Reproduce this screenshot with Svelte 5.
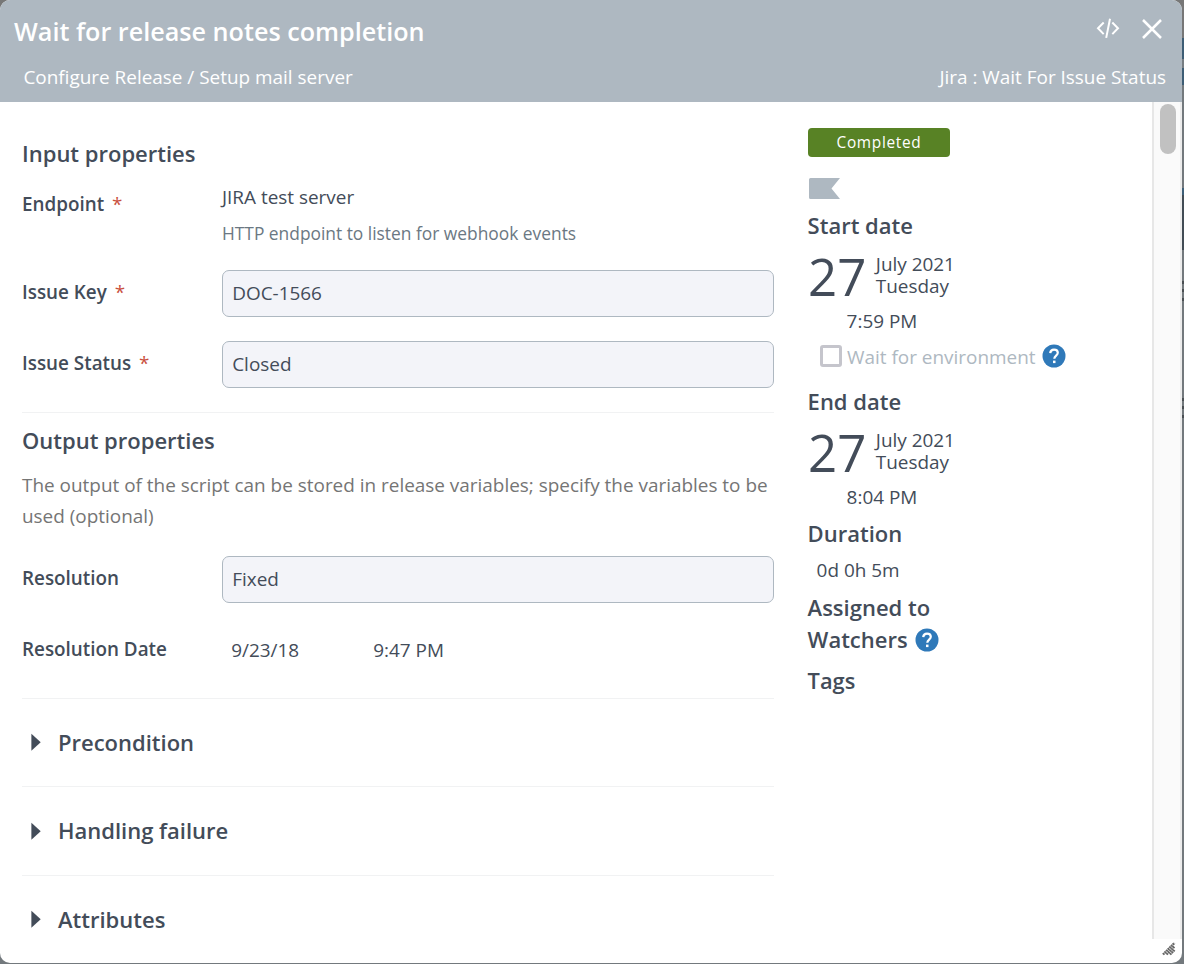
<script>
  const sections = ['Precondition', 'Handling failure', 'Attributes'];
</script>

{#snippet help()}
  <svg class="help" viewBox="0 0 24 24" width="24" height="24" aria-label="Help">
    <circle cx="12" cy="12" r="11.5" fill="#2f79b9" />
    <path d="M8.2 9.2C8.4 6.9 9.9 5.6 12 5.6c2.2 0 3.8 1.3 3.8 3.2 0 2.7-3.5 3-3.5 6" fill="none" stroke="#fff" stroke-width="2.2" />
    <rect x="11" y="16.6" width="2.5" height="2.5" fill="#fff" />
  </svg>
{/snippet}

{#snippet dateBlock(title, time)}
  <h2>{title}</h2>
  <div class="date">
    <span class="day">27</span>
    <div class="month"><span>July 2021</span><span>Tuesday</span></div>
  </div>
  <div class="time">{time}</div>
{/snippet}

<div class="backdrop">
  <div class="modal">
    <header>
      <div class="top">
        <h1>Wait for release notes completion</h1>
        <svg class="code" width="24" height="24" viewBox="0 0 24 24" fill="none" stroke="#fff" stroke-width="2">
          <path d="M7.7 6.5 2 12.3l5.7 5.8M16.3 6.5l5.7 5.8-5.7 5.8M14 2.7l-3.8 19.2" />
        </svg>
        <svg class="close" width="20" height="20" viewBox="0 0 20 20" fill="none" stroke="#fff" stroke-width="2.5">
          <path d="M1 1l18 18M19 1 1 19" />
        </svg>
      </div>
      <div class="sub"><span class="path">Configure Release / Setup mail server</span><span class="kind">Jira : Wait For Issue Status</span></div>
    </header>

    <div class="body">
      <main>
        <h2>Input properties</h2>
        <div class="row endpoint">
          <div class="label">Endpoint <i>*</i></div>
          <div class="value">
            <div class="server">JIRA test server</div>
            <div class="hint">HTTP endpoint to listen for webhook events</div>
          </div>
        </div>
        <div class="row field">
          <div class="label">Issue Key <i>*</i></div>
          <div class="input">DOC-1566</div>
        </div>
        <div class="row field">
          <div class="label">Issue Status <i>*</i></div>
          <div class="input">Closed</div>
        </div>
        <section class="output">
          <h2>Output properties</h2>
          <p>The output of the script can be stored in release variables; specify the variables to be used (optional)</p>
          <div class="row field">
            <div class="label">Resolution</div>
            <div class="input">Fixed</div>
          </div>
          <div class="row field">
            <div class="label">Resolution Date</div>
            <div class="datetime"><span class="d">9/23/18</span><span>9:47 PM</span></div>
          </div>
        </section>
        {#each sections as s}
          <section class="fold">
            <svg width="10" height="18" viewBox="0 0 10 18"><path d="M.4 .7 9.7 9.2 .4 17.7z" fill="#434c59" /></svg>
            <h2>{s}</h2>
          </section>
        {/each}
      </main>

      <aside>
        <div class="badge">Completed</div>
        <svg class="flag" width="31" height="21" viewBox="0 0 31 21"><path d="M1.5 0H31l-8.5 10.5L31 21H1.5Q0 21 0 19.5v-18Q0 0 1.5 0z" fill="#aeb8c1" /></svg>
        {@render dateBlock('Start date', '7:59 PM')}
        <div class="wait"><span class="check"></span><span class="waittext">Wait for environment</span>{@render help()}</div>
        {@render dateBlock('End date', '8:04 PM')}
        <h2 class="dur">Duration</h2>
        <div class="duration">0d 0h 5m</div>
        <h2 class="assigned">Assigned to</h2>
        <h2 class="watch"><span>Watchers</span>{@render help()}</h2>
        <h2 class="tags">Tags</h2>
      </aside>

      <div class="track"><div class="thumb"></div></div>
    </div>
    <svg class="grip" width="14" height="14" viewBox="0 0 14 14" stroke="#666" stroke-width="2.4" stroke-dasharray="1.8 .5">
      <path d="M1 12.5 12.5 1M4.5 12.5 12.5 4.5M8 12.5 12.5 8" fill="none" />
    </svg>
  </div>
</div>

<style>
  :global(body) { margin: 0; overflow: hidden; }
  .backdrop {
    width: 1184px; height: 964px; box-sizing: border-box; padding-right: 2px;
    background: linear-gradient(#777 0 38px, #3d5d75 38px 59px, #777d82 59px 68px, #3d5d75 68px 85px, #73797d 85px 188px, #3d5f78 188px 195px, #424c55 195px 250px, #73797d 250px 281px, #4a4f53 281px 284px, #73797d 284px 289px, #4a4f53 289px 292px, #73797d 292px 298px, #4a4f53 298px 301px, #73797d 301px 398px, #4a4f53 398px 401px, #73797d 401px 406px, #4a4f53 406px 409px, #73797d 409px 415px, #4a4f53 415px 418px, #73797d 418px);
    font-family: "Open Sans", "Noto Sans", sans-serif; font-size: 18.93px; color: #434c59;
  }
  .modal { position: relative; height: 963px; background: #fff; border-radius: 10px; overflow: hidden; }
  header { height: 102px; background: #aeb8c1; color: #fff; }
  .top { display: flex; align-items: center; height: 60px; padding: 2px 20px 0 14px; box-sizing: border-box; }
  h1 { margin: 0; font-size: 25.18px; font-weight: 600; line-height: 36px; flex: 1; }
  .code { margin: -6px 22px 0 0; }
  .close { margin-top: -5px; }
  .sub { display: flex; justify-content: space-between; padding: 1px 16px 0 23.4px; line-height: 32px; }
  .body { display: flex; height: 837px; }
  main { width: 752px; padding: 35px 34px 0 22px; flex: none; }
  h2 { margin: 0 0 1px; font-size: 22px; font-weight: 600; line-height: 32px; white-space: nowrap; }
  .row { display: flex; }
  .label { width: 200px; flex: none; font-weight: 600; font-size: 18.85px; }
  .label i { font-style: normal; font-weight: 400; color: #c94f3e; margin-left: 3px; }
  .endpoint { height: 100px; box-sizing: border-box; }
  .endpoint .label { padding-top: 18px; line-height: 32px; }
  .server { padding-top: 11px; line-height: 32px; }
  .hint { font-size: 17.36px; line-height: 32px; padding-top: 4px; color: #6b7883; }
  .field { height: 47px; margin-bottom: 24px; }
  .field .label { line-height: 44px; }
  .input { flex: 1; border: 1px solid #aeb8c1; border-radius: 7px; background: #f3f4f9; padding-left: 9.2px; line-height: 45px; }
  .output { border-top: 1px solid #f1f2f3; padding-top: 11px; height: 273.7px; }
  .output p { margin: 14px 0 24px; line-height: 31px; color: #757575; }
  .datetime { display: flex; line-height: 47px; padding-left: 9.2px; }
  .d { width: 142px; }
  .fold { border-top: 1px solid #f1f2f3; height: 87.5px; display: flex; align-items: center; gap: 17px; padding-left: 9px; }
  aside { width: 344px; padding-top: 26px; box-sizing: border-box; flex: none; }
  aside h2 { margin-left: -.4px; }
  .badge { width: 142px; height: 29px; line-height: 29px; border-radius: 4px; background: #588225; color: #fff; text-align: center; font-size: 15.4px; letter-spacing: .7px; }
  .flag { display: block; margin: 21px 0 10px 1px; }
  .date { display: flex; height: 61px; }
  .day { width: 67.8px; font-size: 51px; line-height: 68px; }
  .month { display: flex; flex-direction: column; line-height: 22px; padding-top: 11px; }
  .time { padding-left: 38.6px; line-height: 32px; padding-top: 2px; height: 34px; }
  .wait { display: flex; align-items: center; height: 32px; margin: 1px 0 13px 12px; color: #aeb8c1; }
  .waittext { padding-top: 2px; }
  .check { width: 16px; height: 16px; border: 3px solid #c5c5cc; border-radius: 3px; margin-right: 5px; }
  .wait :global(.help) { margin-left: 6.4px; }
  .dur { margin-top: 2px; }
  .duration { padding-left: 8.6px; line-height: 32px; margin: 5px 0 5px; }
  .assigned { margin-bottom: 0; }
  .watch { display: flex; align-items: center; gap: 7px; }
  .watch :global(.help) { margin-top: 2px; }
  aside .tags { margin-top: 10px; font-size: 21.8px; }
  .track { width: 30px; box-sizing: border-box; border-left: 2px solid #e7e7e7; border-right: 2px solid #ececec; background: #fafafa; padding: 2px 0 0 6px; }
  .thumb { width: 16px; height: 50px; border-radius: 8px; background: #c1c1c1; }
  .grip { position: absolute; right: 6px; bottom: 7px; }
</style>
